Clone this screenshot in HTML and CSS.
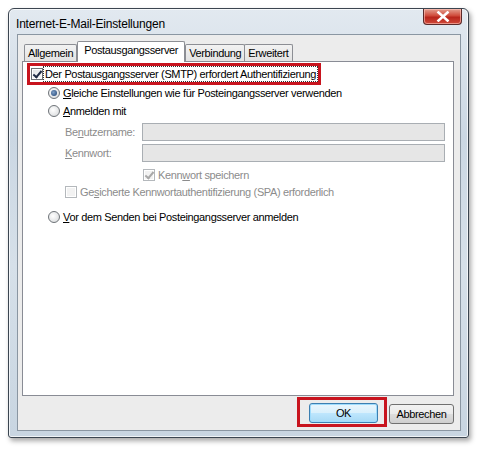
FILE: index.html
```html
<!DOCTYPE html>
<html>
<head>
<meta charset="utf-8">
<link rel="stylesheet" href="styles.css">
</head>
<body>
<div class="window">
  <div class="titlebar">
    <span class="title">Internet-E-Mail-Einstellungen</span>
    <span class="close"><svg width="14" height="11" viewBox="0 0 14 11"><path d="M2.5 1.5 L11.5 9.5 M11.5 1.5 L2.5 9.5" stroke="#fff" stroke-width="2.6" stroke-linecap="square"/></svg></span>
  </div>
  <div class="client">
    <div class="tabs">
      <div class="tab">Allgemein</div>
      <div class="tab active">Postausgangsserver</div>
      <div class="tab">Verbindung</div>
      <div class="tab">Erweitert</div>
    </div>
    <div class="panel">
      <div class="hl-row">
        <span class="cb checked"></span>
        <span class="focus">Der Postausgangsserver (SMTP) erfordert Authentifizierung</span>
      </div>
      <div class="row r1">
        <span class="radio on"></span>
        <span><u>G</u>leiche Einstellungen wie für Posteingangsserver verwenden</span>
      </div>
      <div class="row r2">
        <span class="radio"></span>
        <span><u>A</u>nmelden mit</span>
      </div>
      <div class="field f1">
        <span class="lbl dis">Be<u>n</u>utzername:</span>
        <span class="input"></span>
      </div>
      <div class="field f2">
        <span class="lbl dis"><u>K</u>ennwort:</span>
        <span class="input"></span>
      </div>
      <div class="row save">
        <span class="cb checked dis-cb"></span>
        <span class="dis">Kenn<u>w</u>ort speichern</span>
      </div>
      <div class="row spa">
        <span class="cb dis-cb"></span>
        <span class="dis">Ge<u>s</u>icherte Kennwortauthentifizierung (SPA) erforderlich</span>
      </div>
      <div class="row r3">
        <span class="radio"></span>
        <span><u>V</u>or dem Senden bei Posteingangsserver anmelden</span>
      </div>
    </div>
    <div class="buttons">
      <div class="okwrap"><button class="btn def">OK</button></div>
      <button class="btn cancel">Abbrechen</button>
    </div>
  </div>
</div>
</body>
</html>
```
FILE: styles.css
```css
* { box-sizing: border-box; }
html, body { margin: 0; padding: 0; background: #fff; }
body {
  font-family: "Liberation Sans", Arial, sans-serif;
  font-size: 11px;
  letter-spacing: -0.35px;
  color: #000;
  width: 480px;
  height: 450px;
  padding: 8px 0 0 8px;
}
.window {
  width: 461px;
  height: 430px;
  border: 1px solid #3b4550;
  border-radius: 6px 6px 3px 3px;
  background: linear-gradient(180deg, #e2e9f0 0%, #cbd7e3 30%, #d6e0e9 60%, #c8d5e1 100%);
  box-shadow: 2px 3px 5px rgba(0,0,0,0.35), inset 0 0 0 1px rgba(255,255,255,0.7);
  display: flex;
  flex-direction: column;
  padding: 0 7px 6px 8px;
}
.titlebar {
  height: 25px;
  display: flex;
  align-items: flex-start;
  justify-content: space-between;
  flex: none;
}
.title {
  margin-top: 8px;
  margin-left: -1px;
  font-size: 12px;
  letter-spacing: -0.2px;
  color: #000;
  line-height: 15px;
}
.close {
  width: 39px;
  height: 16px;
  margin-right: -1px;
  background: linear-gradient(180deg, #e4a090 0%, #cf4a3a 45%, #b8261c 55%, #d0493a 100%);
  border: 1px solid #5a2a2a;
  border-top: none;
  border-radius: 0 0 4px 4px;
  display: flex;
  align-items: center;
  justify-content: center;
  box-shadow: inset 0 0 0 1px rgba(255,200,190,0.6);
}
.client {
  flex: 1;
  background: #ececec;
  border: 1px solid #8a96a2;
  display: flex;
  flex-direction: column;
  padding: 5px 6px 0 4px;
}
.tabs {
  display: flex;
  align-items: flex-end;
  height: 21px;
  padding-left: 2px;
  position: relative;
  z-index: 1;
}
.tab {
  height: 17px;
  padding: 0 3px;
  border: 1px solid #8c8e94;
  border-bottom: none;
  background: linear-gradient(180deg, #f2f2f2, #e3e3e3);
  line-height: 16px;
  margin-right: -1px;
  border-radius: 2px 2px 0 0;
  white-space: nowrap;
}
.tab.active {
  height: 21px;
  background: #fff;
  padding: 0 6px;
  margin-left: 1px;
  margin-right: 0;
  line-height: 17px;
  position: relative;
  top: 1px;
  z-index: 2;
}
.panel {
  height: 335px;
  background: #fff;
  border: 1px solid #898c95;
  padding: 1px 0 0 4px;
  display: flex;
  flex-direction: column;
}
.hl-row {
  width: 294px;
  height: 22px;
  border: 3px solid #c8141e;
  display: flex;
  align-items: center;
  padding-left: 1px;
  gap: 1px;
  flex: none;
}
.focus {
  outline: 1px dotted #333;
  padding: 0 1px;
  line-height: 14px;
  white-space: nowrap;
}
.row {
  display: flex;
  align-items: center;
  gap: 3px;
  white-space: nowrap;
  height: 16px;
  line-height: 16px;
  flex: none;
}
.r1 { margin-top: 0; padding-left: 21px; }
.r2 { margin-top: 2px; padding-left: 21px; }
.field {
  display: flex;
  align-items: center;
  height: 18px;
  padding-left: 38px;
  flex: none;
}
.f1 { margin-top: 4px; }
.f2 { margin-top: 3px; }
.lbl { width: 77px; }
.input {
  width: 303px;
  height: 18px;
  background: #e6e6e6;
  border: 1px solid #a9aeb3;
}
.save { margin-top: 5px; padding-left: 116px; }
.spa { margin-top: 1px; padding-left: 38px; }
.r3 { margin-top: 9px; padding-left: 21px; }
.dis { color: #8c8c8c; }
.cb {
  width: 12px;
  height: 12px;
  border: 1px solid #6b6f74;
  background: linear-gradient(135deg, #dfe1e3, #fbfbfb);
  box-shadow: inset 0 0 0 1px #fff;
  position: relative;
  flex: none;
}
.cb.checked::after {
  content: "";
  position: absolute;
  left: 3px;
  top: 0;
  width: 3px;
  height: 7px;
  border: solid #1f2a44;
  border-width: 0 2px 2px 0;
  transform: rotate(40deg);
}
.cb.dis-cb {
  border-color: #b4b8bc;
  background: #f2f2f2;
}
.cb.dis-cb::after { border-color: #a8a8a8; }
.radio {
  width: 12px;
  height: 12px;
  border-radius: 50%;
  border: 1px solid #6e7378;
  background: radial-gradient(circle at 40% 40%, #fff, #d4d6d8);
  position: relative;
  flex: none;
}
.radio.on::after {
  content: "";
  position: absolute;
  left: 2px;
  top: 2px;
  width: 6px;
  height: 6px;
  border-radius: 50%;
  background: radial-gradient(circle at 40% 40%, #7fa0c8, #1b3e6e);
}
u { text-decoration: underline; text-underline-offset: 1px; }
.buttons {
  flex: 1;
  display: flex;
  justify-content: flex-end;
  align-items: flex-start;
  padding-top: 1px;
}
.okwrap {
  border: 3px solid #c8141e;
  padding: 3px 6px 1px 9px;
  height: 30px;
}
.btn {
  font-family: inherit;
  font-size: 11px;
  letter-spacing: -0.35px;
  height: 20px;
  border: 1px solid #707070;
  border-radius: 3px;
  background: linear-gradient(180deg, #f2f2f2 0%, #ebebeb 48%, #dddddd 52%, #cfcfcf 100%);
  padding: 0;
  color: #000;
  margin-top: 7px;
}
.okwrap .btn { margin-top: 0; }
.btn.def {
  width: 69px;
  border-color: #3c7fb1;
  background: linear-gradient(180deg, #eaf6fd 0%, #d9f0fc 48%, #bee6fd 52%, #a7d9f5 100%);
  box-shadow: inset 0 0 0 1px #9fdcfd;
}
.btn.cancel { width: 65px; margin-left: 2px; }
```
